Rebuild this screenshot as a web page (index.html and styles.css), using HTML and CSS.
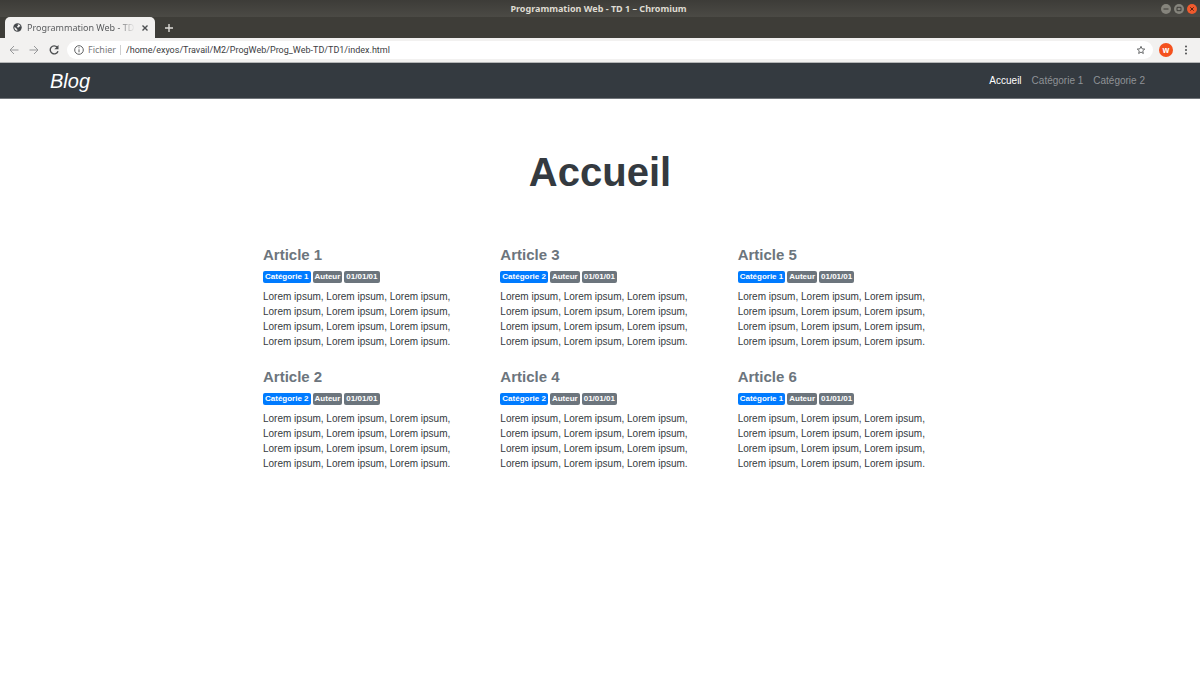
FILE: index.html
```html
<!DOCTYPE html>
<html lang="fr">
<head>
<meta charset="utf-8">
<title>Programmation Web - TD 1</title>
<link rel="stylesheet" href="styles.css">
</head>
<body>
<div class="titlebar">
  <span class="window-title">Programmation Web - TD 1 – Chromium</span>
  <div class="window-controls">
    <button class="window-button" aria-label="Réduire"><svg viewBox="0 0 10 10"><path d="M2.5 5h5"/></svg></button>
    <button class="window-button" aria-label="Agrandir"><svg viewBox="0 0 10 10"><path d="M3 3.3h4v3.4H3z"/></svg></button>
    <button class="window-button window-close" aria-label="Fermer"><svg viewBox="0 0 10 10"><path d="M3.3 3.3l3.4 3.4M6.7 3.3L3.3 6.7"/></svg></button>
  </div>
</div>
<div class="tabstrip">
  <div class="tab">
    <svg class="favicon" viewBox="0 0 16 16"><circle cx="8" cy="8" r="7.5" fill="#45484b"/><path d="M2.500 7l3.700 2.200v1.600l1.600.8v2.200C4.600 13.600 2.500 11 2.500 8zM8.500 2.300c2.200.2 4 1.500 4.900 3.500l-1.900.2-1.500 1.800-2.700-.2-.4-1.400 1.800-1z" fill="#f4f3f2"/></svg>
    <span class="tab-title">Programmation Web - TD</span>
    <button class="icon-button tab-close" aria-label="Fermer l’onglet"><svg viewBox="0 0 10 10"><path d="M2.500 2.500l5 5M7.500 2.500l-5 5"/></svg></button>
  </div>
  <button class="icon-button new-tab" aria-label="Nouvel onglet"><svg viewBox="0 0 10 10"><path d="M5 1v8M1 5h8"/></svg></button>
</div>
<div class="toolbar">
  <div class="history">
    <button class="icon-button muted" aria-label="Précédent"><svg viewBox="0 0 12 12"><path d="M10.500 6H2M6 2L2 6l4 4"/></svg></button>
    <button class="icon-button muted" aria-label="Suivant"><svg viewBox="0 0 12 12"><path d="M1.500 6H10M6 2l4 4-4 4"/></svg></button>
    <button class="icon-button reload" aria-label="Actualiser"><svg viewBox="0 0 12 12"><path d="M9.200 3.200A4 4 0 1 0 10 7.200"/><path class="solid" d="M10.500 1v4.200H6.300z"/></svg></button>
  </div>
  <div class="omnibox">
    <svg class="info" viewBox="0 0 12 12"><circle cx="6" cy="6" r="4.300"/><path d="M6 5.300v3M6 3.300v1"/></svg>
    <label class="scheme" for="address">Fichier</label>
    <input class="address" id="address" type="text" value="/home/exyos/Travail/M2/ProgWeb/Prog_Web-TD/TD1/index.html">
    <button class="icon-button star" aria-label="Favori"><svg viewBox="0 0 12 12"><path d="M6 1.600l1.300 3 3.200.3-2.400 2.100.7 3.200L6 8.500l-2.800 1.700.7-3.200-2.400-2.100 3.200-.3z"/></svg></button>
  </div>
  <button class="avatar">w</button>
  <button class="icon-button menu" aria-label="Menu"><svg viewBox="0 0 12 12"><circle cx="6" cy="2.500" r="1"/><circle cx="6" cy="6" r="1"/><circle cx="6" cy="9.500" r="1"/></svg></button>
</div>

<nav class="navbar">
  <a class="brand" href="#">Blog</a>
  <div class="nav-links">
    <a class="nav-link active" href="#">Accueil</a>
    <a class="nav-link" href="#">Catégorie 1</a>
    <a class="nav-link" href="#">Catégorie 2</a>
  </div>
</nav>

<main class="content">
  <h1 class="page-title">Accueil</h1>
  <div class="articles">
    <article>
      <h2 class="article-title">Article 1</h2>
      <div class="badges"><span class="badge category">Catégorie 1</span><span class="badge">Auteur</span><span class="badge">01/01/01</span></div>
      <p class="text">Lorem ipsum, Lorem ipsum, Lorem ipsum, Lorem ipsum, Lorem ipsum, Lorem ipsum, Lorem ipsum, Lorem ipsum, Lorem ipsum, Lorem ipsum, Lorem ipsum, Lorem ipsum.</p>
    </article>
    <article>
      <h2 class="article-title">Article 2</h2>
      <div class="badges"><span class="badge category">Catégorie 2</span><span class="badge">Auteur</span><span class="badge">01/01/01</span></div>
      <p class="text">Lorem ipsum, Lorem ipsum, Lorem ipsum, Lorem ipsum, Lorem ipsum, Lorem ipsum, Lorem ipsum, Lorem ipsum, Lorem ipsum, Lorem ipsum, Lorem ipsum, Lorem ipsum.</p>
    </article>
    <article>
      <h2 class="article-title">Article 3</h2>
      <div class="badges"><span class="badge category">Catégorie 2</span><span class="badge">Auteur</span><span class="badge">01/01/01</span></div>
      <p class="text">Lorem ipsum, Lorem ipsum, Lorem ipsum, Lorem ipsum, Lorem ipsum, Lorem ipsum, Lorem ipsum, Lorem ipsum, Lorem ipsum, Lorem ipsum, Lorem ipsum, Lorem ipsum.</p>
    </article>
    <article>
      <h2 class="article-title">Article 4</h2>
      <div class="badges"><span class="badge category">Catégorie 2</span><span class="badge">Auteur</span><span class="badge">01/01/01</span></div>
      <p class="text">Lorem ipsum, Lorem ipsum, Lorem ipsum, Lorem ipsum, Lorem ipsum, Lorem ipsum, Lorem ipsum, Lorem ipsum, Lorem ipsum, Lorem ipsum, Lorem ipsum, Lorem ipsum.</p>
    </article>
    <article>
      <h2 class="article-title">Article 5</h2>
      <div class="badges"><span class="badge category">Catégorie 1</span><span class="badge">Auteur</span><span class="badge">01/01/01</span></div>
      <p class="text">Lorem ipsum, Lorem ipsum, Lorem ipsum, Lorem ipsum, Lorem ipsum, Lorem ipsum, Lorem ipsum, Lorem ipsum, Lorem ipsum, Lorem ipsum, Lorem ipsum, Lorem ipsum.</p>
    </article>
    <article>
      <h2 class="article-title">Article 6</h2>
      <div class="badges"><span class="badge category">Catégorie 1</span><span class="badge">Auteur</span><span class="badge">01/01/01</span></div>
      <p class="text">Lorem ipsum, Lorem ipsum, Lorem ipsum, Lorem ipsum, Lorem ipsum, Lorem ipsum, Lorem ipsum, Lorem ipsum, Lorem ipsum, Lorem ipsum, Lorem ipsum, Lorem ipsum.</p>
    </article>
  </div>
</main>
</body>
</html>
```
FILE: styles.css
```css
* { box-sizing: border-box; }

body {
  margin: 0;
  background: #fff;
  color: #343a40;
  font: 10px/15px "Liberation Sans", Arial, sans-serif;
}

button {
  padding: 0;
  border: 0;
  background: none;
  font: inherit;
}

a { text-decoration: none; }

svg {
  display: block;
  width: 100%;
  fill: none;
  stroke: currentColor;
}

/* Browser window */
.titlebar, .tabstrip, .toolbar {
  display: flex;
  align-items: center;
  font-family: "Noto Sans", "Open Sans", sans-serif;
  font-size: 9px;
}

.titlebar {
  display: grid;
  grid-template-columns: 1fr auto 1fr;
  height: 17px;
  padding-right: 3px;
  background: linear-gradient(#3d3c38, #4b4a45);
  color: #dfdbd2;
}

.window-title {
  grid-column: 2;
  font-weight: 700;
}

.window-controls {
  display: flex;
  justify-content: flex-end;
  gap: 3px;
}

.window-button {
  width: 10px;
  height: 10px;
  border-radius: 50%;
  background: #85847c;
  color: #3c3b37;
}

.window-close {
  background: #f05a2d;
  color: #5c2110;
}

.tabstrip {
  height: 21px;
  padding-left: 5px;
  background: #3e3d38;
}

.tab {
  display: flex;
  align-items: center;
  width: 150px;
  height: 21px;
  padding: 0 5px 0 8px;
  border-radius: 5px 5px 0 0;
  background: #f2f1f0;
  color: #5a5c5e;
}

.favicon {
  flex: none;
  width: 9px;
  margin-right: 5px;
  stroke: none;
}

.tab-title {
  flex: 1;
  white-space: nowrap;
  mask-image: linear-gradient(to right, #000 85%, transparent);
}

.icon-button {
  flex: none;
  width: 12px;
  color: #4d4f51;
}

.tab-close {
  width: 10px;
  margin-left: 5px;
}

.tab-close svg, .reload svg, .new-tab svg { stroke-width: 1.4; }

.new-tab {
  width: 10px;
  margin-left: 9px;
  color: #dedcd8;
}

.toolbar {
  height: 25px;
  padding: 0 8px 1px;
  border-bottom: 1px solid #b5b6b7;
  background: #f2f1f0;
}

.history {
  display: flex;
  gap: 8px;
  margin-right: 7px;
}

.muted { color: #97989a; }

.solid {
  fill: currentColor;
  stroke: none;
}

.omnibox {
  display: flex;
  flex: 1;
  align-items: center;
  height: 18px;
  padding: 0 7px 0 6px;
  border-radius: 9px;
  background: #fff;
}

.info {
  width: 12px;
  margin-right: 3px;
  color: #5f6163;
}

.scheme {
  padding-right: 4px;
  border-right: 1px solid #cfd0d1;
  color: #77797b;
  line-height: 10px;
}

.address {
  flex: 1;
  min-width: 0;
  padding: 0 0 0 5px;
  border: 0;
  outline: 0;
  background: none;
  color: #3c3d3f;
  font: 9px Roboto, sans-serif;
}

.star { width: 10px; }

.avatar {
  width: 14px;
  height: 14px;
  margin: 0 7px 0 6px;
  border-radius: 50%;
  background: #f4511e;
  color: #fff;
  font-size: 8px;
  font-weight: 700;
  line-height: 13px;
}

.menu circle {
  fill: currentColor;
  stroke: none;
}

/* Page */
.navbar {
  display: flex;
  align-items: center;
  justify-content: space-between;
  height: 36px;
  padding: 0 55px 0 50px;
  border-bottom: 1px solid #71757a;
  background: #343a40;
}

.brand {
  color: #fff;
  font-size: 20px;
  font-style: italic;
  line-height: 30px;
}

.nav-links {
  display: flex;
  gap: 10px;
}

.nav-link { color: #8f9296; }

.nav-link.active { color: #fff; }

.content {
  max-width: 674px;
  margin: 0 auto;
  padding: 49px 0;
}

.page-title {
  margin: 0 0 50px;
  font-size: 40px;
  line-height: 48px;
  text-align: center;
}

.articles {
  display: grid;
  grid-template-rows: repeat(2, auto);
  grid-auto-columns: 1fr;
  grid-auto-flow: column;
  gap: 19px 38px;
}

.article-title {
  margin: 0 0 7px;
  color: #6c757d;
  font-size: 15px;
  line-height: 18px;
}

.badges {
  display: flex;
  gap: 2px;
  margin-bottom: 6px;
}

.badge {
  padding: 0 2px;
  border-radius: 2px;
  background: #6c757d;
  color: #fff;
  font-size: 8px;
  font-weight: 700;
  line-height: 12px;
}

.category { background: #007bff; }

.text { margin: 0; }
```
